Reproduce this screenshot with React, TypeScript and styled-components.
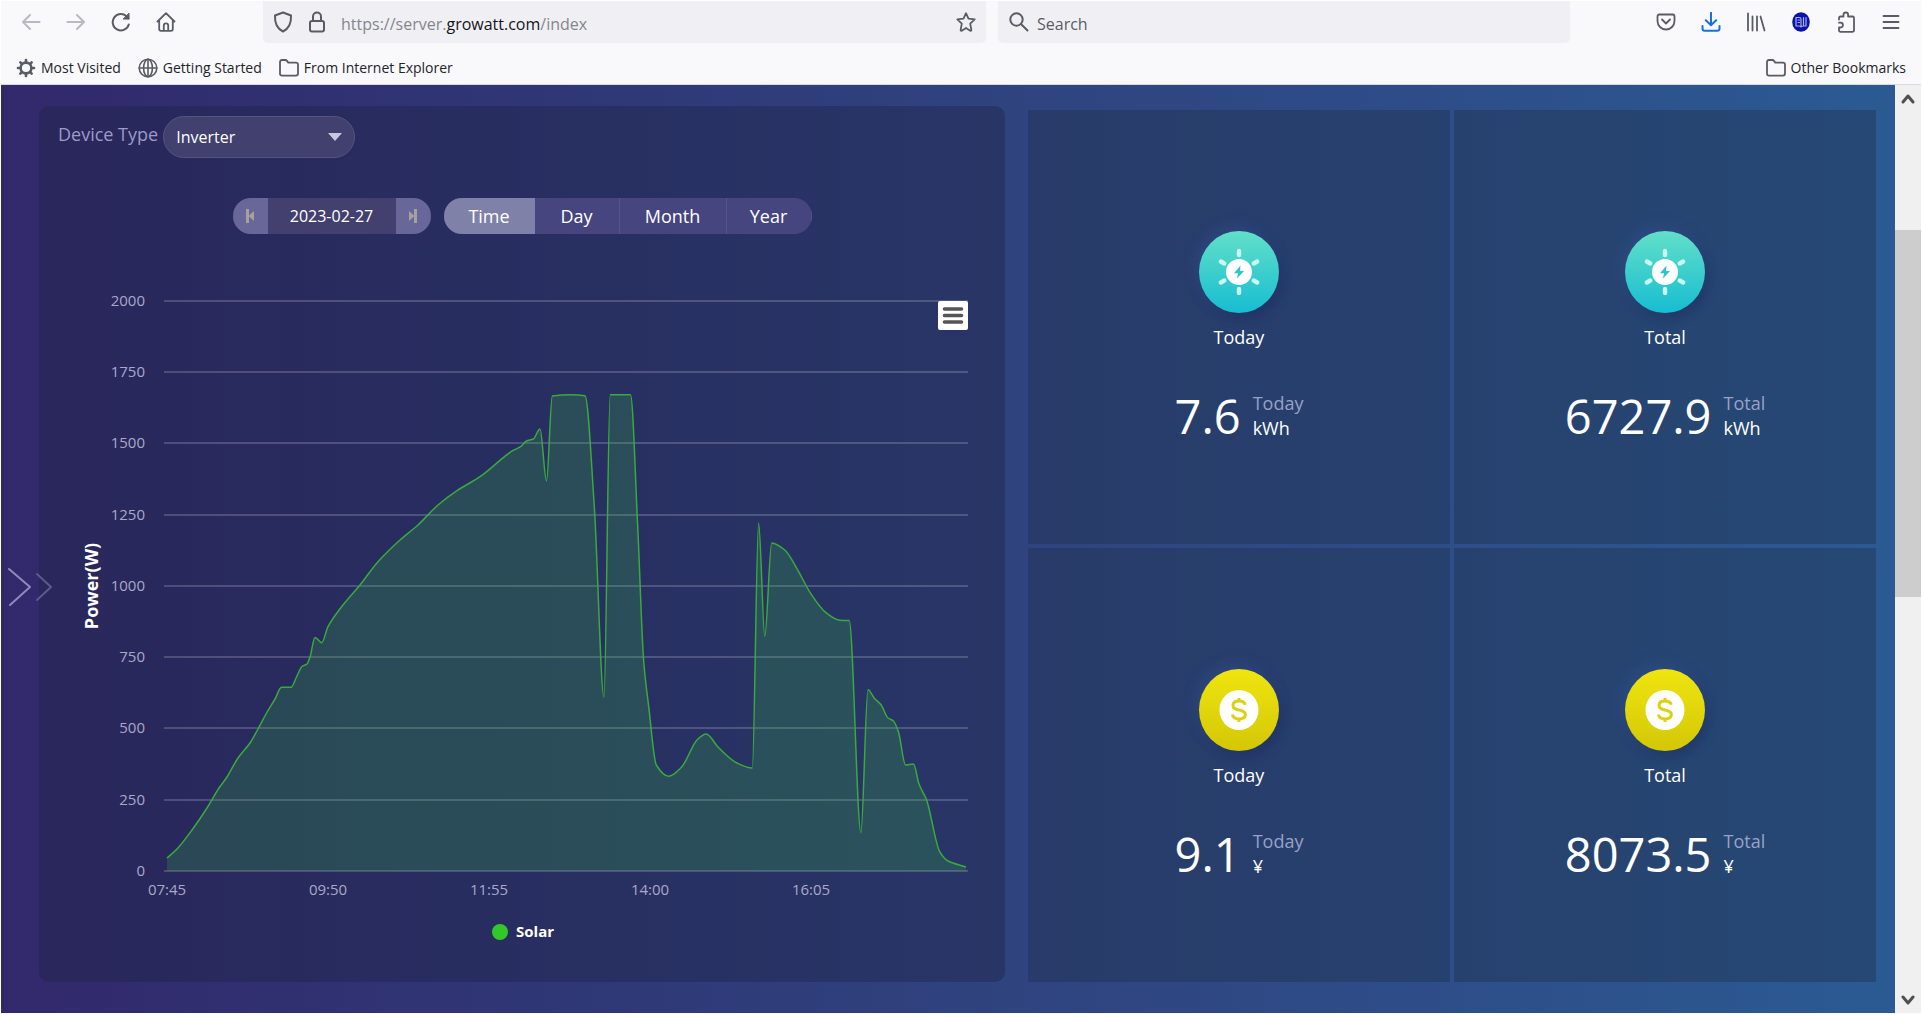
import React from 'react';
import styled, { createGlobalStyle } from 'styled-components';

const FONT = '"Open Sans", "Noto Sans", sans-serif';

const GlobalStyle = createGlobalStyle`
  *, *::before, *::after { box-sizing: border-box; }
  body { margin: 0; background: #fff; font-family: ${FONT}; }
  button, input, select { font: inherit; color: inherit; }
  button { border: 0; padding: 0; background: none; cursor: pointer; }
  a { color: inherit; text-decoration: none; }
`;

/* ---------- Browser chrome ---------- */

const Window = styled.div`
  display: flex;
  flex-direction: column;
  min-height: 100vh;
  padding: 1px;
`;

const Chrome = styled.header`
  height: 84px;
  flex: none;
  background: #f9f9fb;
  border-bottom: 1px solid #d8d8de;
  color: #5b5b66;
`;

const NavBar = styled.div`
  display: flex;
  align-items: flex-start;
  height: 42px;
  padding: 0 8px 0 7px;
`;

const NavGroup = styled.div<{ $push?: boolean }>`
  display: flex;
  margin-left: ${(p) => (p.$push ? 'auto' : '0')};
`;

const NavButton = styled.button<{ $faded?: boolean }>`
  display: grid;
  place-items: center;
  width: 45px;
  height: 42px;
  opacity: ${(p) => (p.$faded ? 0.4 : 1)};
`;

const AddressBar = styled.div`
  display: flex;
  align-items: center;
  flex: 0 1 723px;
  height: 42px;
  margin-left: 75px;
  padding: 0 10px;
  gap: 15px;
  background: #f0f0f4;
  border-radius: 0 0 5px 5px;
`;

const Address = styled.div`
  flex: 1;
  margin-top: 4px;
  font-size: 16px;
  line-height: 22px;
  color: #85858d;
`;

const Host = styled.span`
  color: #15141a;
`;

const IconButton = styled.button`
  display: grid;
  place-items: center;
`;

const SearchBar = styled.label`
  display: flex;
  align-items: center;
  flex: 0 1 572px;
  height: 42px;
  margin-left: 12px;
  padding: 0 11px;
  gap: 8px;
  background: #f0f0f4;
  border-radius: 0 0 5px 5px;
`;

const SearchInput = styled.input`
  flex: 1;
  min-width: 0;
  margin-top: 4px;
  padding: 0;
  border: 0;
  outline: 0;
  background: none;
  font-size: 16px;
  line-height: 22px;
  &::placeholder { color: #5b5b66; opacity: 1; }
`;

const Bookmarks = styled.nav`
  display: flex;
  align-items: center;
  gap: 17px;
  height: 41px;
  padding: 8px 15px 0;
`;

const Bookmark = styled.a<{ $push?: boolean }>`
  display: flex;
  align-items: center;
  gap: 5px;
  margin-left: ${(p) => (p.$push ? 'auto' : '0')};
  font-size: 14px;
  line-height: 20px;
  color: #24232b;
  svg { color: #5b5b66; }
`;

/* ---------- Page ---------- */

const Viewport = styled.div`
  position: relative;
  display: flex;
  flex: 1;
`;

const Page = styled.main`
  display: grid;
  grid-template-columns: minmax(0, 966fr) minmax(0, 848fr);
  gap: 23px;
  flex: 1;
  padding: 21px 19px 31px 38px;
  background: linear-gradient(90deg, #32296c 0%, #2f3676 28%, #2f437f 53%, #2e4d88 75%, #2b5a92 100%);
`;

const Panel = styled.section`
  position: relative;
  display: flex;
  flex-direction: column;
  border-radius: 10px;
  background: rgba(30, 34, 62, 0.38);
`;

const DeviceRow = styled.div`
  display: flex;
  align-items: center;
  gap: 5px;
  padding: 10px 19px 0;
`;

const DeviceLabel = styled.label`
  font-size: 18px;
  line-height: 24px;
  padding-bottom: 6px;
  color: #9e99c9;
`;

const SelectBox = styled.div`
  display: grid;
  grid-template-columns: 1fr 38px;
  align-items: center;
  width: 192px;
  height: 42px;
  border: 1px solid #55537f;
  border-radius: 21px;
  background: #42406e;
  color: #c9c8da;
  svg { grid-area: 1 / 2; justify-self: center; pointer-events: none; }
`;

const DeviceSelect = styled.select`
  grid-area: 1 / 1 / 2 / 3;
  appearance: none;
  height: 40px;
  padding: 0 0 0 12px;
  border: 0;
  outline: 0;
  background: none;
  font-size: 16px;
  color: #fff;
  option { color: #222; }
`;

const ToolRow = styled.div`
  display: flex;
  justify-content: center;
  gap: 13px;
  padding-top: 40px;
`;

const DateGroup = styled.div`
  display: flex;
  height: 36px;
  overflow: hidden;
  border-radius: 18px;
  background: #43406f;
`;

const StepButton = styled.button`
  display: grid;
  place-items: center;
  width: 35px;
  background: #69669a;
  color: #a4a19f;
`;

const DateInput = styled.input`
  width: 128px;
  padding: 0;
  border: 0;
  outline: 0;
  background: none;
  text-align: center;
  font-size: 16px;
  line-height: 34px;
  color: #fff;
`;

const Tabs = styled.div`
  display: flex;
  height: 36px;
  overflow: hidden;
  border-radius: 18px;
  background: #474580;
`;

const Tab = styled.button<{ $active?: boolean; $wide?: boolean }>`
  width: ${(p) => (p.$active ? 91 : p.$wide ? 107 : 85)}px;
  background: ${(p) => (p.$active ? '#7f81a8' : 'none')};
  font-size: 18px;
  line-height: 34px;
  color: #fff;
  & + & { border-right: 1px solid #56548c; }
  &:last-child { border-right: 0; }
`;

const Chart = styled.svg`
  display: block;
  width: 100%;
  height: auto;
  font-family: ${FONT};
`;

const AxisText = styled.text`
  font-size: 15px;
  fill: #aba7c9;
`;

const BoldText = styled.text<{ $size: number }>`
  font-size: ${(p) => p.$size}px;
  font-weight: 700;
  fill: #fff;
`;

const ChartMenu = styled.button`
  position: absolute;
  top: 195px;
  right: 37px;
  display: grid;
  place-items: center;
  width: 30px;
  height: 29px;
  border-radius: 2px;
  background: #fff;
  color: #555;
`;

const Cards = styled.section`
  display: grid;
  grid-template-columns: 1fr 1fr;
  grid-auto-rows: 1fr;
  gap: 4px;
  margin-top: 4px;
`;

const Card = styled.article`
  display: flex;
  flex-direction: column;
  align-items: center;
  padding-top: 121px;
  background: rgba(30, 48, 72, 0.4);
`;

const Badge = styled.div<{ $tone: 'teal' | 'yellow' }>`
  display: grid;
  place-items: center;
  width: 80px;
  height: 82px;
  border-radius: 50%;
  color: #fff;
  background: ${(p) =>
    p.$tone === 'teal'
      ? 'linear-gradient(180deg, #62dfc8, #17bdd2)'
      : 'linear-gradient(180deg, #efe50f, #d3c707)'};
  box-shadow: -3px -4px 14px rgba(70, 100, 190, 0.3), 3px 4px 12px rgba(20, 30, 80, 0.4);
`;

const CardTitle = styled.h2`
  margin: 11px 0 0;
  font-size: 18px;
  font-weight: 400;
  line-height: 26px;
  color: #fff;
`;

const Reading = styled.div`
  display: flex;
  align-items: center;
  gap: 12px;
  margin-top: 34px;
`;

const Value = styled.span`
  font-size: 47px;
  line-height: 64px;
  color: #fff;
`;

const Units = styled.div`
  display: flex;
  flex-direction: column;
  font-size: 18px;
  line-height: 25px;
  color: #9aa0c9;
`;

const Unit = styled.span`
  color: #fff;
`;

const DrawerButton = styled.button`
  position: absolute;
  left: 6px;
  top: 480px;
  width: 46px;
  height: 44px;
`;

const Scrollbar = styled.div`
  display: flex;
  flex-direction: column;
  flex: none;
  width: 26px;
  background: #f0f0f0;
  color: #505050;
`;

const ScrollButton = styled.button`
  display: grid;
  place-items: center;
  height: 27px;
`;

const Track = styled.div`
  display: flex;
  flex-direction: column;
  flex: 1;
`;

const Space = styled.div<{ $share: number }>`
  flex: ${(p) => p.$share} 0 0;
`;

const Thumb = styled(Space)`
  background: #cdcdcd;
`;

/* ---------- Icons ---------- */

type IconProps = { w?: number; h?: number; box?: string; sw?: number; color?: string; children: React.ReactNode };

const Icon = ({ w = 20, h = 20, box = '0 0 20 20', sw = 2, color = 'currentColor', children }: IconProps) => (
  <svg width={w} height={h} viewBox={box} fill="none" stroke={color} strokeWidth={sw} strokeLinecap="round" strokeLinejoin="round" aria-hidden="true">
    {children}
  </svg>
);

const FolderIcon = () => (
  <Icon w={20} h={20} sw={1.8}>
    <path d="M1 16V4.2Q1 2 3 2h3.4q1 0 1.6.9L9.3 4.6H17q2 0 2 2V15.6q0 2-2 2H3q-2 0-2-1.8Z" />
  </Icon>
);

const SunIcon = () => (
  <svg width="44" height="50" viewBox="-22 -25 44 50" aria-hidden="true">
    {[0, 60, 120, 180, 240, 300].map((a) => (
      <line key={a} x1="0" y1="-21" x2="0" y2="-17" stroke="#c9f8ee" strokeWidth="4.4" strokeLinecap="round" transform={`rotate(${a})`} />
    ))}
    <circle r="13" fill="#fff" />
    <path d="M1.5-6.5-5 1.2h4L-2 6.5 5-1H1Z" fill="#2cc4c9" />
  </svg>
);

const CoinIcon = () => (
  <svg width="40" height="42" viewBox="-20 -21 40 42" fill="none" aria-hidden="true">
    <ellipse rx="19.5" ry="20" fill="#fff" />
    <path d="M6.2-5.2C5.6-8 3.4-9 0-9c-3.600 0-6 1.700-6 4.400C-6-1.500-3.400-.7 0 0s6.400 1.500 6.400 4.600C6.400 7.400 3.800 9 0 9c-3.700 0-6.100-1.400-6.600-4.400M0-12v3M0 9v3" stroke="#dcd013" strokeWidth="3" />
  </svg>
);

/* ---------- Chart data ---------- */

type Point = [number, number];

const BASE = 871;
const STEP = 71.3;
const LEFT = 164;
const RIGHT = 968;

const solar: Point[] = [
  [167, 858], [177, 849], [192, 830], [207, 808], [219, 788], [227, 777], [238, 758], [250, 743],
  [258, 729], [266, 714], [275, 699], [281.5, 687.3], [291, 687.3], [296.5, 677], [302, 666.5],
  [307, 664], [310, 657], [315, 637.5], [321.7, 642.7], [328, 626.7], [343, 605], [360, 585],
  [378, 561.7], [400, 540], [418, 525], [438, 505], [457, 490.7], [480, 476.7], [512.7, 450.7],
  [520.6, 446.7], [526.5, 441], [533.4, 439], [540, 429], [546.5, 481], [552.3, 396], [571, 394.7],
  [585, 395.7], [594.3, 506.7], [604, 697], [610.2, 394.7], [630.5, 394.7], [637.7, 526.7],
  [643.6, 660], [648.7, 706.7], [656.3, 765], [668.7, 776.3], [681.4, 767.3], [697.6, 739.3],
  [706.2, 734], [718.3, 747.3], [736.5, 762.7], [752.3, 768], [758.6, 523], [764.8, 636.5],
  [771.7, 543], [784.8, 550], [796.8, 568.3], [810.6, 593.3], [826, 612.7], [839.9, 620.3],
  [849.2, 620.5], [860.9, 832.5], [868, 689.7], [874.3, 698.3], [881.2, 705], [887.7, 717.7],
  [893.2, 720.7], [898.4, 731.7], [905.6, 765], [913.5, 764], [919, 784], [926.6, 800],
  [939.7, 851.7], [948, 861], [966, 867],
];

/* Monotone cubic spline, so that peaks and plateaus are never overshot. */
function spline(pts: Point[]) {
  const slope = pts.slice(1).map(([x, y], i) => (y - pts[i][1]) / (x - pts[i][0]));
  const tangent = pts.map((_, i) => {
    if (i === 0) return slope[0];
    if (i === pts.length - 1) return slope[i - 1];
    const a = slope[i - 1];
    const b = slope[i];
    return a * b <= 0 ? 0 : (2 * a * b) / (a + b);
  });
  let d = `M${pts[0][0]} ${pts[0][1]}`;
  for (let i = 1; i < pts.length; i++) {
    const [x0, y0] = pts[i - 1];
    const [x1, y1] = pts[i];
    const h = (x1 - x0) / 3;
    d += `C${x0 + h} ${y0 + h * tangent[i - 1]} ${x1 - h} ${y1 - h * tangent[i]} ${x1} ${y1}`;
  }
  return d;
}

const curve = spline(solar);
const times = ['07:45', '09:50', '11:55', '14:00', '16:05'];

const PowerChart = () => (
  <Chart viewBox="39 234 966 744" role="img" aria-label="Solar power over time">
    {Array.from({ length: 9 }, (_, i) => {
      const y = Math.round(BASE - i * STEP);
      return (
        <g key={i}>
          <line x1={LEFT} x2={RIGHT} y1={y} y2={y} stroke="#fff" strokeOpacity="0.18" strokeWidth="2" />
          <AxisText x={145} y={y + 5} textAnchor="end">{i * 250}</AxisText>
        </g>
      );
    })}
    <path d={`${curve}V${BASE}H${solar[0][0]}Z`} fill="#32c83c" fillOpacity="0.2" />
    <path d={curve} fill="none" stroke="#3aaa3c" strokeWidth="1.5" strokeLinejoin="round" />
    {times.map((t, i) => (
      <AxisText key={t} x={167 + i * 161} y={895} textAnchor="middle">{t}</AxisText>
    ))}
    <BoldText $size={18} textAnchor="middle" transform="translate(98 586) rotate(-90)">Power(W)</BoldText>
    <ellipse cx="500" cy="932" rx="8" ry="8" fill="#32c828" />
    <BoldText $size={15} x={516} y={937}>Solar</BoldText>
  </Chart>
);

/* ---------- App ---------- */

const readings = [
  { label: 'Today', value: '7.6', unit: 'kWh', tone: 'teal' as const },
  { label: 'Total', value: '6727.9', unit: 'kWh', tone: 'teal' as const },
  { label: 'Today', value: '9.1', unit: '¥', tone: 'yellow' as const },
  { label: 'Total', value: '8073.5', unit: '¥', tone: 'yellow' as const },
];

export default function App() {
  return (
    <Window>
      <GlobalStyle />
      <Chrome>
        <NavBar>
          <NavGroup>
            <NavButton $faded aria-label="Back">
              <Icon><path d="M18.500 10H2M9 3 2 10l7 7" /></Icon>
            </NavButton>
            <NavButton $faded aria-label="Forward">
              <Icon><path d="M1.500 10H18M11 3l7 7-7 7" /></Icon>
            </NavButton>
            <NavButton aria-label="Reload">
              <Icon><path d="M17.800 12.500A8.200 8.200 0 1 1 15.500 4.200L17.500 6.400" /><path d="M18 1.500v5.500h-5.500Z" fill="currentColor" strokeWidth="1" /></Icon>
            </NavButton>
            <NavButton aria-label="Home">
              <Icon sw={1.8}><path d="M1.500 9.500 10 1.200l8.500 8.300M3.200 8.500V17q0 1.800 1.800 1.800h10q1.800 0 1.800-1.800V8.500M7.800 18.500v-5q0-2.200 2.200-2.200t2.200 2.200v5" /></Icon>
            </NavButton>
          </NavGroup>
          <AddressBar>
            <IconButton aria-label="Tracking protection">
              <Icon w={20} h={22} box="0 0 20 22"><path d="M10 1.500 18 4.500c.3 6-1 12.500-8 16C3 17 1.700 10.500 2 4.500Z" /></Icon>
            </IconButton>
            <IconButton aria-label="Connection secure">
              <Icon w={18} h={22} box="0 0 18 22"><path d="M5 10V5.500a4 4 0 0 1 8 0V10" /><rect x="2" y="10" width="14" height="10.500" rx="2" /></Icon>
            </IconButton>
            <Address role="textbox" aria-label="Address" tabIndex={0}>
              https://server.<Host>growatt.com</Host>/index
            </Address>
            <IconButton aria-label="Bookmark this page">
              <Icon sw={1.8}><path d="m10 1.200 2.500 5.500 6.200.7-4.500 4.200 1.200 6.500q-.2.900-1.200.6L10 16l-4.200 2.700q-1 .3-1.200-.6l1.200-6.500L1.300 7.400l6.200-.7Z" /></Icon>
            </IconButton>
          </AddressBar>
          <SearchBar>
            <Icon><circle cx="7.500" cy="7.500" r="6.200" /><path d="m12.200 12.200 6.300 6.300" /></Icon>
            <SearchInput placeholder="Search" aria-label="Search" />
          </SearchBar>
          <NavGroup $push>
            <NavButton aria-label="Pocket">
              <Icon sw={1.800}><path d="M3.500 2.500h13q2 0 2 2v4.500a8.500 8.500 0 0 1-17 0V4.500q0-2 2-2ZM6 7.500l4 4 4-4" /></Icon>
            </NavButton>
            <NavButton aria-label="Downloads">
              <Icon color="#1a6fe0"><path d="M10 .8V13M4.800 8.200 10 13.200l5.200-5M1.500 14v2.500q0 2.200 2.200 2.200h12.600q2.200 0 2.200-2.200V14" /></Icon>
            </NavButton>
            <NavButton aria-label="Library">
              <Icon sw={1.800}><path d="M2 1.500v17M6.500 4.500v14M11 4.500v14M14.500 4.500l4 14" /></Icon>
            </NavButton>
            <NavButton aria-label="Reader extension">
              <Icon sw={1.200} color="#a9adec">
                <ellipse cx="10" cy="10" rx="8.800" ry="9.800" fill="#0a12a8" stroke="none" />
                <path d="M5 5.500h3.200q1.800 0 1.800 1.500v8q0-1-1.800-1H5ZM15 14h-2.500M15 5.500V14M10 15q.2-1 2.500-1V5.500M7 8h1.500M7 10.500h1.500" />
              </Icon>
            </NavButton>
            <NavButton aria-label="Extensions">
              <Icon w={20} h={22} box="0 0 20 22" sw={1.800}><path d="M3 8.500V7Q3 5.500 4.500 5.500h3V3.800a2.300 2.300 0 0 1 4.600 0V5.500H16.500q1.500 0 1.500 1.500V19q0 1.800-1.800 1.800H4.800Q3 20.800 3 19.300V16.500h1.500a2.400 2.400 0 0 0 0-4.800H3" /></Icon>
            </NavButton>
            <NavButton aria-label="Menu">
              <Icon sw={1.800}><path d="M2.500 4h15M2.500 10h15M2.500 16h15" /></Icon>
            </NavButton>
          </NavGroup>
        </NavBar>
        <Bookmarks aria-label="Bookmarks">
          <Bookmark href="#most-visited">
            <Icon sw={2.600}>
              <circle cx="10" cy="10" r="5.400" />
              {[0, 45, 90, 135, 180, 225, 270, 315].map((a) => (
                <path key={a} d="M10 4V2" transform={`rotate(${a} 10 10)`} />
              ))}
            </Icon>
            Most Visited
          </Bookmark>
          <Bookmark href="#getting-started">
            <Icon sw={1.600}><circle cx="10" cy="10" r="8.800" /><ellipse cx="10" cy="10" rx="4.400" ry="8.800" /><path d="M1.200 10h17.600M10 1.200v17.600" /></Icon>
            Getting Started
          </Bookmark>
          <Bookmark href="#from-internet-explorer"><FolderIcon />From Internet Explorer</Bookmark>
          <Bookmark href="#other" $push><FolderIcon />Other Bookmarks</Bookmark>
        </Bookmarks>
      </Chrome>

      <Viewport>
        <Page>
          <Panel>
            <DeviceRow>
              <DeviceLabel htmlFor="device">Device Type</DeviceLabel>
              <SelectBox>
                <DeviceSelect id="device" defaultValue="Inverter">
                  <option>Inverter</option>
                </DeviceSelect>
                <svg width="14" height="8" viewBox="0 0 14 8" aria-hidden="true"><path d="M0 0h14L7 8Z" fill="currentColor" /></svg>
              </SelectBox>
            </DeviceRow>
            <ToolRow>
              <DateGroup>
                <StepButton aria-label="Previous day">
                  <svg width="8" height="14" viewBox="0 0 8 14" aria-hidden="true"><path d="M0 0h3v14H0ZM8 2v10L2.500 7Z" fill="currentColor" /></svg>
                </StepButton>
                <DateInput defaultValue="2023-02-27" aria-label="Date" />
                <StepButton aria-label="Next day">
                  <svg width="8" height="14" viewBox="0 0 8 14" aria-hidden="true"><path d="M8 0H5v14h3ZM0 2v10l5.500-5Z" fill="currentColor" /></svg>
                </StepButton>
              </DateGroup>
              <Tabs>
                <Tab $active>Time</Tab>
                <Tab>Day</Tab>
                <Tab $wide>Month</Tab>
                <Tab>Year</Tab>
              </Tabs>
            </ToolRow>
            <PowerChart />
            <ChartMenu aria-label="Chart menu">
              <Icon w={22} h={19} box="0 0 22 19" sw={3.600}><path d="M2.500 3h17M2.500 9.500h17M2.500 16h17" /></Icon>
            </ChartMenu>
          </Panel>
          <Cards>
            {readings.map((r) => (
              <Card key={r.value}>
                <Badge $tone={r.tone}>{r.tone === 'teal' ? <SunIcon /> : <CoinIcon />}</Badge>
                <CardTitle>{r.label}</CardTitle>
                <Reading>
                  <Value>{r.value}</Value>
                  <Units>
                    {r.label}
                    <Unit>{r.unit}</Unit>
                  </Units>
                </Reading>
              </Card>
            ))}
          </Cards>
        </Page>
        <DrawerButton aria-label="Open side menu">
          <Icon w={46} h={44} box="0 0 46 44" sw={2}>
            <path d="M2 4l21 18L3 40" stroke="#8f8abb" />
            <path d="M30 9l14 13-14 13" stroke="#5d588f" />
          </Icon>
        </DrawerButton>
        <Scrollbar>
          <ScrollButton aria-label="Scroll up">
            <Icon w={14} h={12} box="0 0 14 12" sw={3}><path d="m2 9 5-6 5 6" /></Icon>
          </ScrollButton>
          <Track>
            <Space $share={118} />
            <Thumb $share={367} />
            <Space $share={389} />
          </Track>
          <ScrollButton aria-label="Scroll down">
            <Icon w={14} h={12} box="0 0 14 12" sw={3}><path d="m2 3 5 6 5-6" /></Icon>
          </ScrollButton>
        </Scrollbar>
      </Viewport>
    </Window>
  );
}
